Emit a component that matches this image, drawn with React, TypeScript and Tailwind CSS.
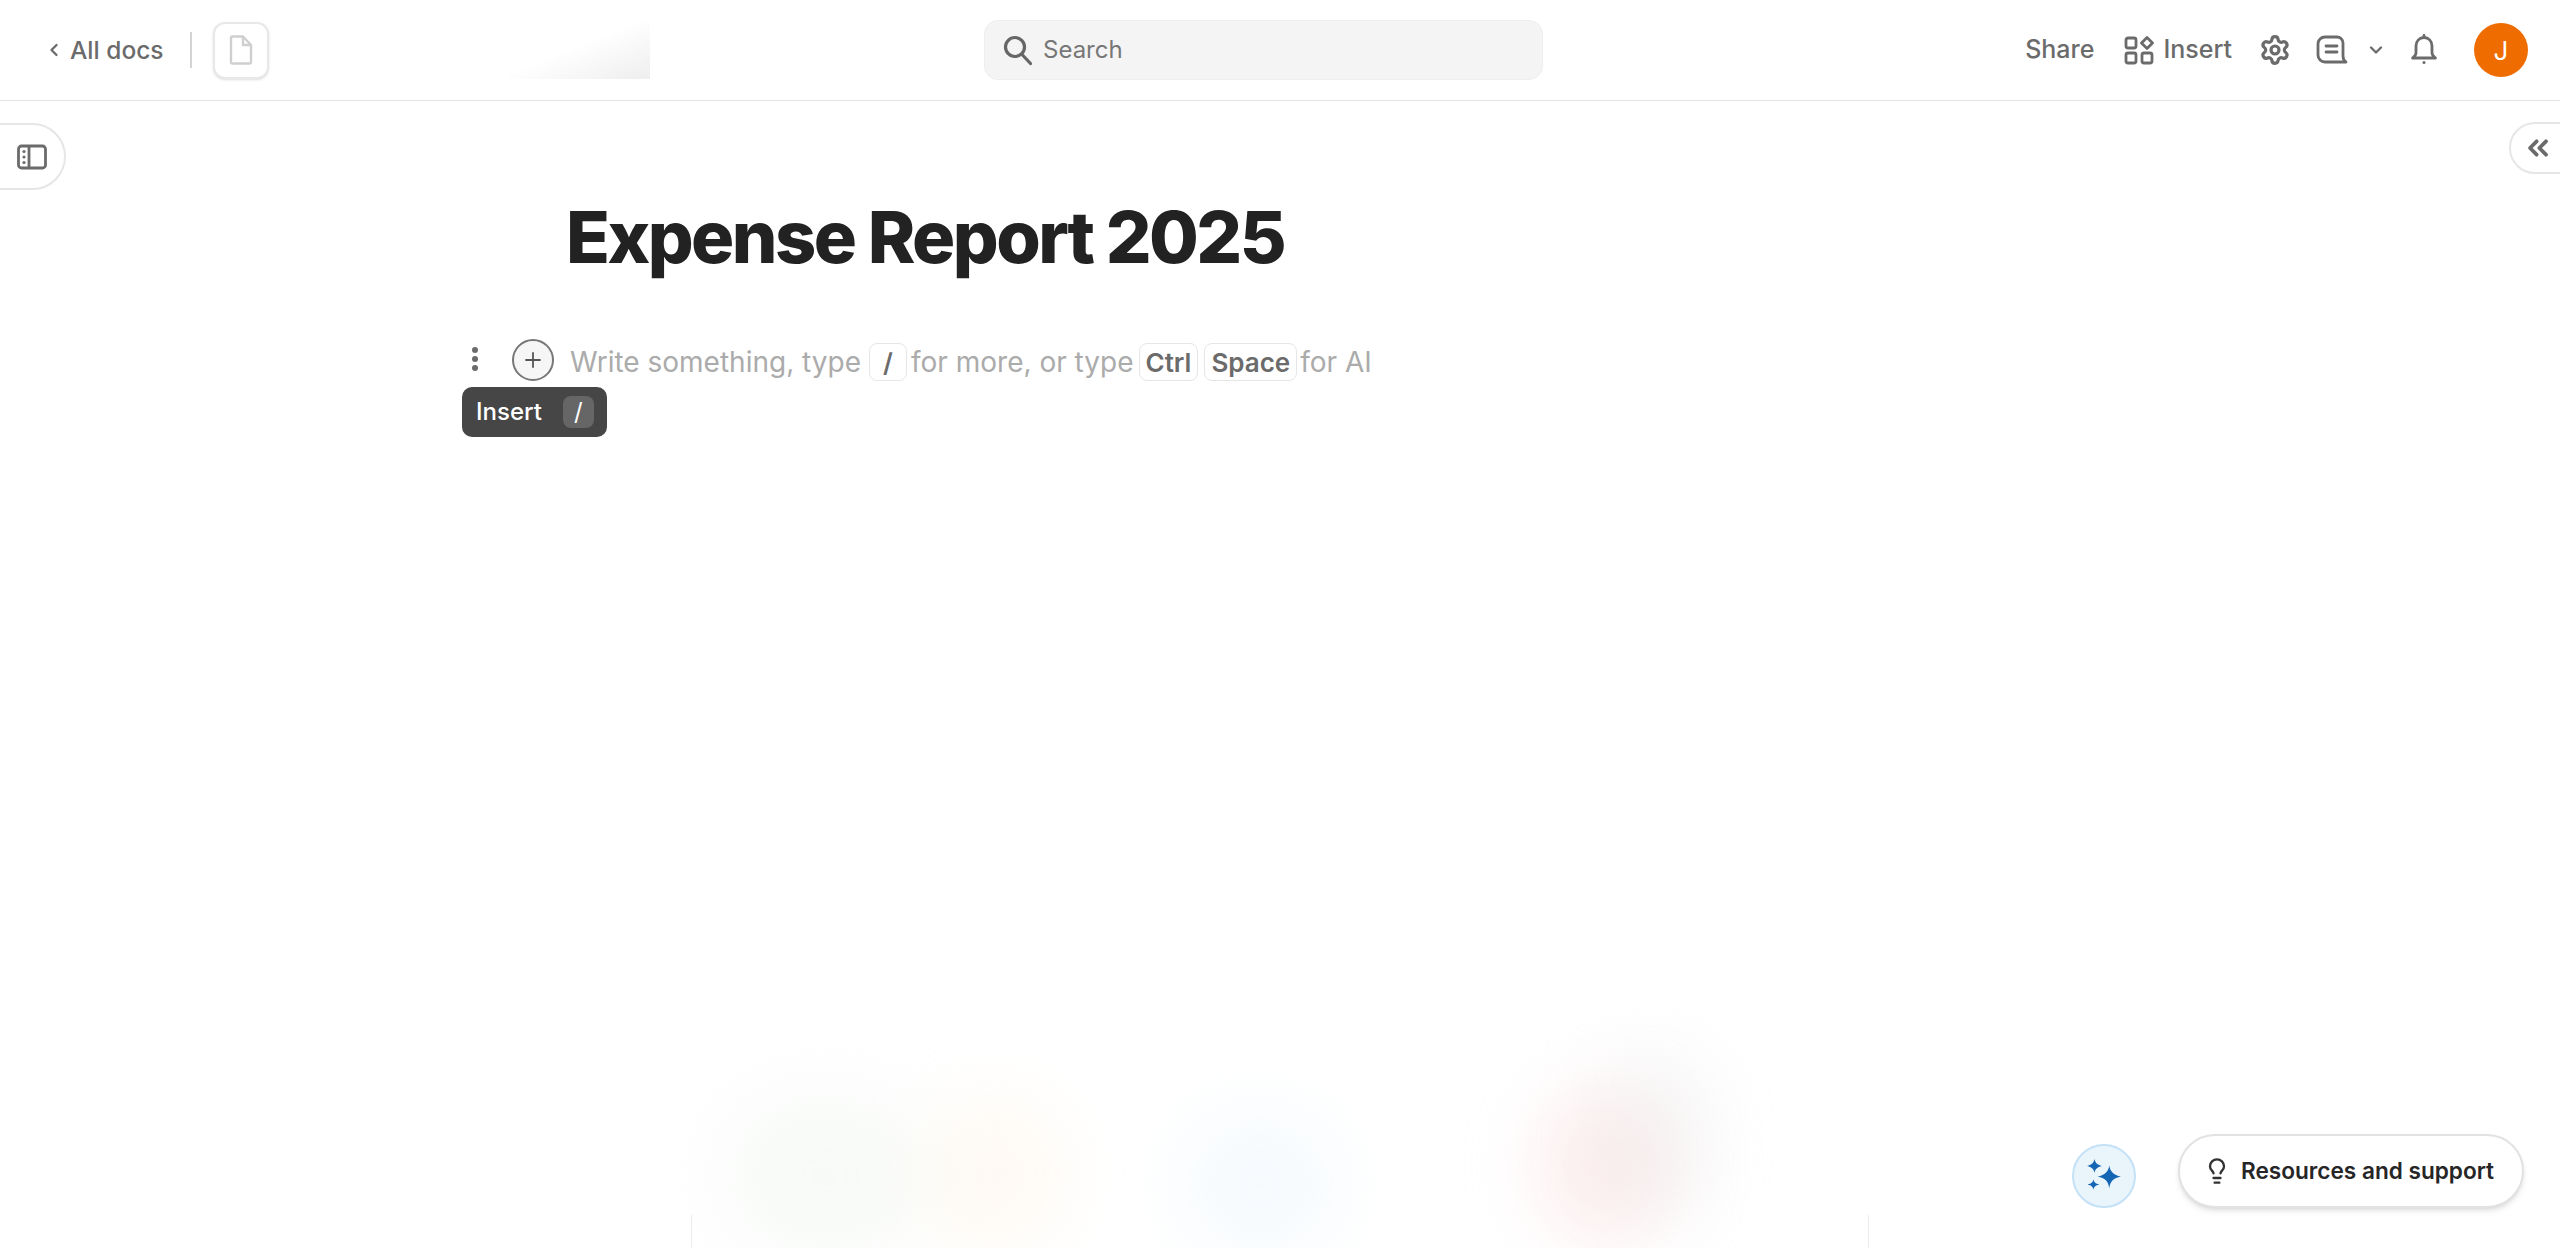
import { ChevronDown, ChevronLeft, ChevronsLeft, Lightbulb, Plus, Settings } from 'lucide-react';

const SearchIcon = () => (
  <svg width="30" height="32" viewBox="0 0 30 32" fill="none" stroke="#666666" strokeWidth="3.2" strokeLinecap="round">
    <circle cx="12" cy="13" r="9.500" />
    <path d="M19 20.500 L27.500 29.500" />
  </svg>
);

const BellIcon = () => (
  <svg width="28" height="32" viewBox="0 0 28 32" fill="none" stroke="#6b6b6b" strokeWidth="2.800" strokeLinecap="round" strokeLinejoin="round">
    <path d="M14 3.500c-4.500 0-8 3.500-8 8.500v7c0 2-1.500 3.500-3.500 5h23c-2-1.500-3.500-3-3.500-5v-7c0-5-3.500-8.500-8-8.500Z" />
    <path d="M14 1.500v2" />
    <circle cx="14" cy="28.500" r="1.500" fill="#6b6b6b" stroke="none" />
  </svg>
);

const InsertIcon = () => (
  <svg width="30" height="30" viewBox="0 0 30 30" fill="none" stroke="#6b6b6b" strokeWidth="2.800" strokeLinejoin="round">
    <rect x="2" y="3" width="10" height="10" rx="2" />
    <path d="M23 2.500 L28.500 8 L23 13.500 L17.500 8 Z" />
    <rect x="2" y="18" width="10" height="10" rx="2" />
    <rect x="18" y="18" width="10" height="10" rx="2" />
  </svg>
);

const CommentIcon = () => (
  <svg width="32" height="30" viewBox="0 0 32 30" fill="none" stroke="#6b6b6b" strokeWidth="2.800" strokeLinecap="round" strokeLinejoin="round">
    <path d="M9 2h12a6 6 0 0 1 6 6v13c0 3 1 5 3 6H9a7 7 0 0 1-7-7V9a7 7 0 0 1 7-7Z" />
    <path d="M10 11h11M10 17h11" />
  </svg>
);

const DocIcon = () => (
  <svg width="24" height="30" viewBox="0 0 24 30" fill="none" stroke="#cfcfcf" strokeWidth="2.400" strokeLinejoin="round">
    <path d="M2 3a1.500 1.500 0 0 1 1.500-1.500H14L22 10v17a1.500 1.500 0 0 1-1.500 1.500h-17A1.500 1.500 0 0 1 2 27Z" />
    <path d="M14 1.500V10h8" />
  </svg>
);

const PanelIcon = () => (
  <svg width="30" height="26" viewBox="0 0 30 26" fill="none" stroke="#6b6b6b" strokeWidth="2.800">
    <rect x="1.500" y="2" width="27" height="22" rx="3" />
    <path d="M12 2v22" />
    <circle cx="7" cy="7.500" r="1.600" fill="#6b6b6b" stroke="none" />
    <circle cx="7" cy="13" r="1.600" fill="#6b6b6b" stroke="none" />
    <circle cx="7" cy="18.500" r="1.600" fill="#6b6b6b" stroke="none" />
  </svg>
);

const SparkleIcon = () => (
  <svg width="38" height="38" viewBox="0 0 36 36" fill="#1565b5">
    <path d="M23 8c1 6 4 9 11 10.500c-7 1.500-10 4.500-11 11c-1-6.500-4-9.500-11-11c7-1.500 10-4.500 11-10.500Z" />
    <path d="M9 2c.7 3.600 2.500 5.400 7 6.500c-4.500 1.100-6.300 2.900-7 6.500c-.7-3.600-2.500-5.400-7-6.500c4.500-1.100 6.300-2.900 7-6.500Z" />
    <path d="M8 21c.5 2.800 1.800 4 5.500 5c-3.700 1-5 2.200-5.500 5c-.5-2.800-1.800-4-5.500-5c3.700-1 5-2.200 5.500-5Z" />
  </svg>
);

const Kbd = ({ children, className }: { children: React.ReactNode; className: string }) => (
  <span className={`inline-flex h-[38px] items-center justify-center rounded-[8px] border border-[#e6e6e6] text-[26px] font-semibold text-[#6b6b6b] ${className}`}>
    {children}
  </span>
);

export default function App() {
  return (
    <div className="relative h-[1248px] w-full overflow-hidden bg-white [font-family:Inter,sans-serif]">
      <header className="flex h-[101px] items-center border-b border-[#e3e3e3]">
        <div className="flex w-[984px] shrink-0 items-center pl-[44px]">
          <ChevronLeft size={20} strokeWidth={2.800} className="text-[#6b6b6b]" />
          <span className="ml-[6px] text-[24.500px] font-medium text-[#6b6b6b]">All docs</span>
          <div className="ml-[26px] h-[36px] w-[2px] bg-[#d4d4d4]" />
          <button className="ml-[21px] flex h-[57px] w-[56px] items-center justify-center rounded-[12px] border-2 border-[#e8e8e8] bg-white shadow-sm">
            <DocIcon />
          </button>
          <div className="ml-[240px] h-[57px] w-[141px] bg-gradient-to-br from-white from-45% to-[#eeeeee]" />
        </div>
        <div className="flex h-[60px] w-[559px] items-center rounded-[14px] border border-[#eeeeee] bg-[#f4f4f4] pl-[18px]">
          <SearchIcon />
          <span className="ml-[10px] text-[24px] text-[#777777]">Search</span>
        </div>
        <div className="flex flex-1 items-center justify-end pr-[32px]">
          <span className="text-[25px] font-medium text-[#6b6b6b]">Share</span>
          <span className="ml-[30px]"><InsertIcon /></span>
          <span className="ml-[9px] text-[25px] font-medium text-[#6b6b6b]">Insert</span>
          <Settings size={32} strokeWidth={2.400} className="ml-[27px] text-[#6b6b6b]" />
          <span className="ml-[25px]"><CommentIcon /></span>
          <ChevronDown size={20} strokeWidth={2.800} className="ml-[18px] text-[#6b6b6b]" />
          <span className="ml-[24px]"><BellIcon /></span>
          <div className="ml-[36px] flex h-[54px] w-[54px] items-center justify-center rounded-full bg-[#ef6c00] text-[26px] text-white">J</div>
        </div>
      </header>

      <main className="pl-[566px] pt-[92px]">
        <h1 className="text-[72px] leading-[88px] font-extrabold tracking-[-0.035em] text-[#222222]">Expense Report 2025</h1>
        <div className="relative mt-[61px] flex h-[40px] items-center text-[28px] text-[#ababab]">
          <div className="absolute top-[5px] left-[-94px] flex flex-col gap-[3px]">
            <span className="h-[6px] w-[6px] rounded-full bg-[#6b6b6b]" />
            <span className="h-[6px] w-[6px] rounded-full bg-[#6b6b6b]" />
            <span className="h-[6px] w-[6px] rounded-full bg-[#6b6b6b]" />
          </div>
          <div className="absolute top-[-3px] left-[-54px] flex h-[42px] w-[42px] items-center justify-center rounded-full border-2 border-[#777777] bg-[#f6f6f6]">
            <Plus size={24} strokeWidth={1.800} className="text-[#555555]" />
          </div>
          <span className="ml-[4px]">Write something, type</span>
          <Kbd className="mr-[4px] ml-[8px] w-[38px]">/</Kbd>
          <span>for more, or type</span>
          <Kbd className="mr-[6px] ml-[5px] px-[6px]">Ctrl</Kbd>
          <Kbd className="mr-[3px] px-[6px]">Space</Kbd>
          <span>for AI</span>
          <div className="absolute top-[45px] left-[-104px] flex h-[50px] w-[145px] items-center rounded-[10px] bg-[#464646] pl-[14px] text-[24px] font-medium text-white">
            Insert
            <span className="ml-[21px] flex h-[32px] w-[31px] items-center justify-center rounded-[8px] bg-[#666666] font-normal">/</span>
          </div>
        </div>
      </main>

      <button className="absolute top-[123px] left-[-40px] flex h-[67px] w-[106px] items-center justify-end rounded-full border-2 border-[#e6e6e6] bg-white pr-[17px]">
        <PanelIcon />
      </button>
      <button className="absolute top-[122px] right-[-40px] flex h-[52px] w-[91px] items-center rounded-full border-2 border-[#e6e6e6] bg-white pl-[11px]">
        <ChevronsLeft size={32} strokeWidth={2.800} className="text-[#6b6b6b]" />
      </button>

      <div className="absolute top-[1090px] left-[720px] h-[170px] w-[210px] rounded-full bg-[#e6efe6] opacity-30 blur-[40px]" />
      <div className="absolute top-[1100px] left-[930px] h-[150px] w-[130px] rounded-full bg-[#fdeedb] opacity-35 blur-[36px]" />
      <div className="absolute top-[1110px] left-[1180px] h-[150px] w-[160px] rounded-full bg-[#e5f1fb] opacity-35 blur-[36px]" />
      <div className="absolute top-[1090px] left-[1540px] h-[150px] w-[130px] rounded-full bg-[#fbdcdc] opacity-50 blur-[36px]" />
      <div className="absolute top-[1050px] left-[1600px] h-[170px] w-[110px] rounded-full bg-[#e4e4e4] opacity-30 blur-[36px]" />
      <div className="absolute top-[1215px] left-[691px] h-[40px] w-[1178px] border-x border-[#ececec]" />

      <button className="absolute top-[1144px] left-[2072px] flex h-[64px] w-[64px] items-center justify-center rounded-full border-2 border-[#c4e2f7] bg-[#eaf4fb]">
        <SparkleIcon />
      </button>
      <button className="absolute top-[1134px] left-[2178px] flex h-[74px] w-[346px] items-center rounded-full border-2 border-[#e2e2e2] bg-white pl-[23px] shadow-md">
        <Lightbulb size={28} strokeWidth={2} className="text-[#333333]" />
        <span className="ml-[10px] text-[22.600px] font-semibold text-[#262626]">Resources and support</span>
      </button>
    </div>
  );
}
